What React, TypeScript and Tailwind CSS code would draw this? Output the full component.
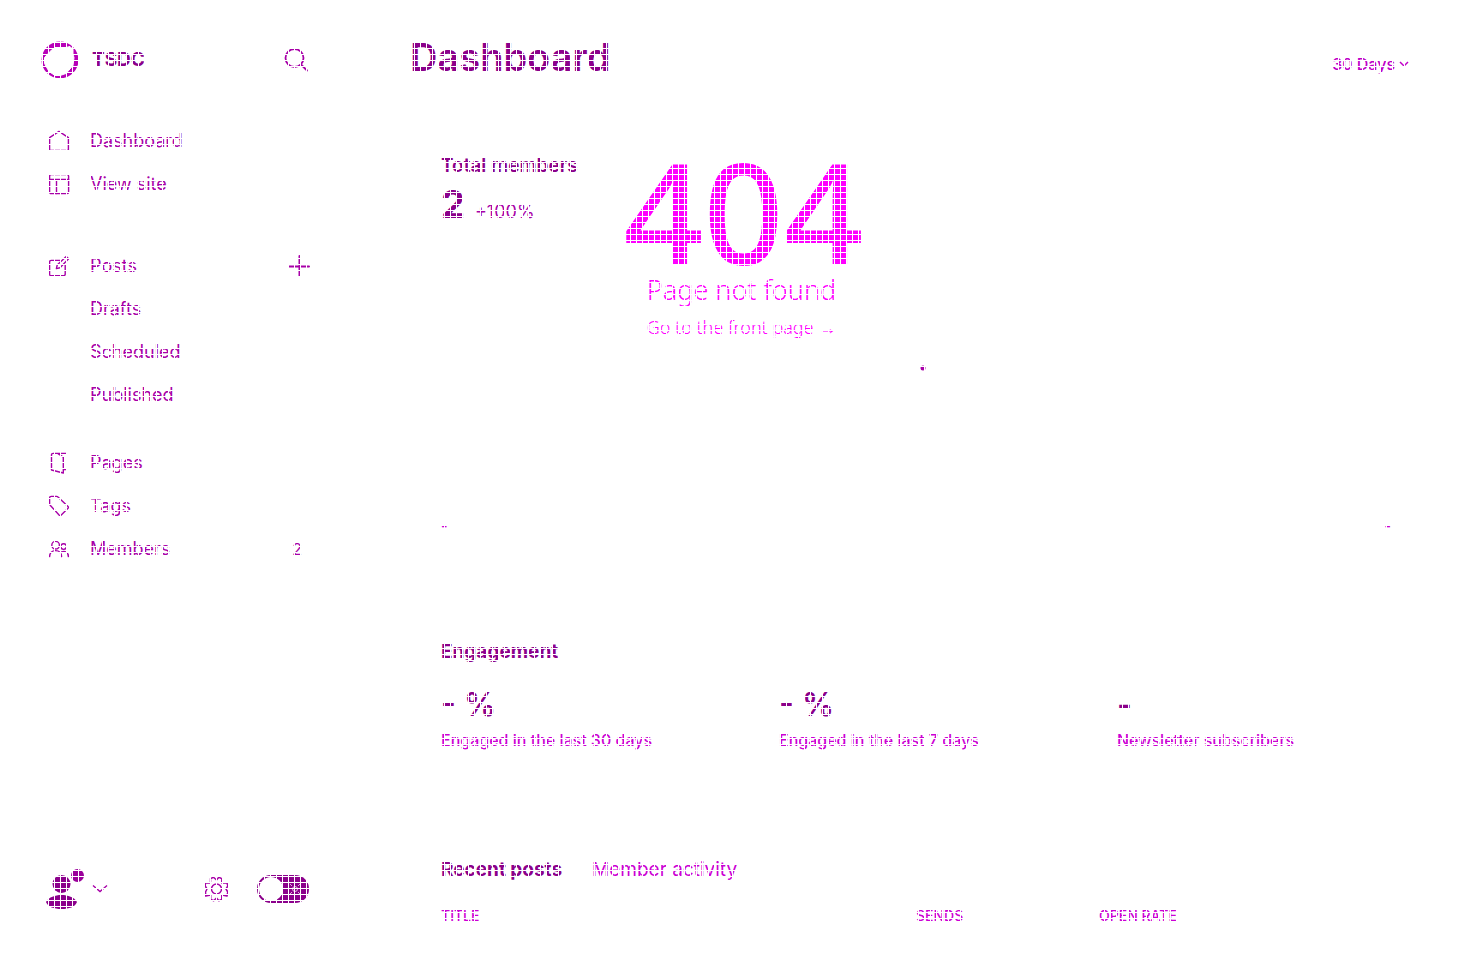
import type { ReactNode } from "react";

function Icon({ children, className = "size-[22px]" }: { children: ReactNode; className?: string }) {
  return (
    <svg
      viewBox="0 0 22 22"
      fill="none"
      stroke="currentColor"
      strokeWidth="1.4"
      strokeLinecap="round"
      strokeLinejoin="round"
      aria-hidden="true"
      className={`shrink-0 ${className}`}
    >
      {children}
    </svg>
  );
}

const HomeIcon = () => (
  <Icon>
    <path d="M1.6 7.6 11 1.4l9.4 6.2v12.8H1.6z" />
  </Icon>
);
const SiteIcon = () => (
  <Icon>
    <rect x="1.6" y="1.6" width="19" height="19" rx="1.5" />
    <path d="M1.6 6.5h19M8.5 6.5v14" />
  </Icon>
);
const PostsIcon = () => (
  <Icon>
    <path d="M12 5.4H3.2a1.6 1.6 0 0 0-1.6 1.6v12.2a1.6 1.6 0 0 0 1.6 1.6h12.4a1.6 1.6 0 0 0 1.6-1.6V10" />
    <path d="m8.4 13.6.8-3.6 9-8.6 2.4 2.4-8.6 9z" />
  </Icon>
);
const PagesIcon = () => (
  <Icon>
    <path d="M3.5 18V3a1.6 1.6 0 0 1 1.600-1.600h13M3.500 18l11.800 3V5.200L10 1.600M15.500 17.500h2.400" />
  </Icon>
);
const TagIcon = () => (
  <Icon>
    <path d="M1.6 8.8V3a1.6 1.6 0 0 1 1.6-1.6h5.4a2 2 0 0 1 1.4.6l10 9.6a1.2 1.2 0 0 1 0 1.7l-7 7a1.2 1.2 0 0 1-1.7 0L2.2 10.2a2 2 0 0 1-.6-1.4z" />
  </Icon>
);
const MembersIcon = () => (
  <Icon>
    <circle cx="7.6" cy="7.2" r="3.8" />
    <circle cx="15.6" cy="8.6" r="2.8" />
    <path d="M1.6 18.6c.2-4 2.6-6 6-6s5.8 2 6 6M13.6 13.8c3.6-1.4 6.6.6 6.8 4.8" />
  </Icon>
);

function NavItem({ icon, label, end }: { icon?: ReactNode; label: string; end?: ReactNode }) {
  return (
    <li className="flex h-[43px] items-center justify-between">
      <a href="#" className="flex items-center gap-5">
        <span className="size-[22px]">{icon}</span>
        {label}
      </a>
      {end}
    </li>
  );
}

function Metric({ value, label }: { value: string; label: string }) {
  return (
    <div>
      <p className="text-[32px] leading-[40px] font-semibold text-[#8b008b]">{value}</p>
      <p className="mt-[3px] text-base leading-6 font-medium text-[#cc00d4]">{label}</p>
    </div>
  );
}

export default function App() {
  return (
    <div className="relative flex min-h-screen bg-white font-['Inter',sans-serif] text-[#a800a8]">
      <aside className="flex w-[351px] shrink-0 flex-col pr-[41px] pb-[44px] pl-12">
        <div className="flex h-[120px] items-center justify-between">
          <a href="#" className="-ml-2 flex items-center gap-3 text-[19px] font-bold text-[#8b008b]">
            <svg viewBox="0 0 40 40" className="size-10" aria-hidden="true">
              <circle cx="20" cy="20" r="18.500" fill="#b800b8" />
              <path d="M12 9.500 15 7.500h11l4-1 3 3v5l1 3-1 8-7 8-6 2h-5l-6-4-4.500-8v-6z" fill="#fff" stroke="#fff" strokeWidth="1" strokeLinejoin="round" />
            </svg>
            TSDC
          </a>
          <button type="button" aria-label="Search">
            <svg viewBox="0 0 26 26" className="size-[26px]" fill="none" stroke="currentColor" strokeWidth="1.8" strokeLinecap="round">
              <circle cx="10.5" cy="11" r="9" />
              <path d="m17 17.500 6 6" />
            </svg>
          </button>
        </div>
        <nav className="-mt-px text-lg">
          <ul>
            <NavItem icon={<HomeIcon />} label="Dashboard" />
            <NavItem icon={<SiteIcon />} label="View site" />
          </ul>
          <ul className="mt-[39px]">
            <NavItem
              icon={<PostsIcon />}
              label="Posts"
              end={
                <button type="button" aria-label="New post">
                  <Icon>
                    <path d="M11.5 1v20M1 11.5h20" strokeWidth="2" />
                  </Icon>
                </button>
              }
            />
            <NavItem label="Drafts" />
            <NavItem label="Scheduled" />
            <NavItem label="Published" />
          </ul>
          <ul className="mt-[25px]">
            <NavItem icon={<PagesIcon />} label="Pages" />
            <NavItem icon={<TagIcon />} label="Tags" />
            <NavItem icon={<MembersIcon />} label="Members" end={<span className="pr-2 text-base">2</span>} />
          </ul>
        </nav>
        <div className="mt-auto flex items-center justify-between pr-px">
          <button type="button" aria-label="Account" className="-ml-[2px] flex items-center gap-[6px]">
            <svg viewBox="0 0 40 42" className="h-[42px] w-10" fill="#8b008b" aria-hidden="true">
              <circle cx="15.5" cy="16" r="9" />
              <path d="M0 34c3-5 9-7 15.500-7S28 29 31 34c-2 5-8 7-15.500 7S2 39 0 34z" />
              <circle cx="31.500" cy="7.500" r="6.500" fill="#9a009a" />
            </svg>
            <svg viewBox="0 0 16 10" className="h-[10px] w-4" fill="none" stroke="currentColor" strokeWidth="1.4" aria-hidden="true">
              <path d="m1 1.500 7 6 7-6" />
            </svg>
          </button>
          <div className="flex items-center gap-7">
            <button type="button" aria-label="Settings">
              <svg viewBox="0 0 26 26" className="size-[26px]" fill="none" stroke="currentColor" strokeWidth="1.5" strokeLinejoin="round">
                <circle cx="13.500" cy="13" r="5" />
                <path d="m13.500 4 2.300-2.800 3 1.400V7l5.200-.2.800 3.200-1.800 3 1.800 3-.8 4-5.200-1v4.400l-3 1.400-2.300-2.800-2.800 2.800-3-1.400V19l-5 1-.2-4L4 13l-1.800-3 .3-3.200 5 .2V2.600l3-1.400z" />
              </svg>
            </button>
            <label className="relative flex h-7 w-[52px] cursor-pointer items-center rounded-full bg-[#8b008b] p-[2px]">
              <input type="checkbox" aria-label="Night mode" className="peer sr-only" />
              <span className="size-6 rounded-full bg-white" />
              <svg viewBox="0 0 12 12" className="ml-[6px] size-3" stroke="#fff" strokeWidth="0.7" fill="none" aria-hidden="true">
                <circle cx="6" cy="6" r="2.500" />
                <path d="m1 1 2 2M11 1 9 3M1 11l2-2M11 11 9 9" />
              </svg>
            </label>
          </div>
        </div>
      </aside>

      <main className="min-w-0 flex-1 pr-[74px] pl-[60px]">
        <header className="-ml-px flex h-[114px] items-center justify-between">
          <h1 className="text-[38px] leading-[46px] font-semibold text-[#8b008b]">Dashboard</h1>
          <button type="button" className="mt-[14px] flex items-center gap-1 text-base font-medium text-[#c000c8]">
            30 Days
            <svg viewBox="0 0 10 8" className="h-2 w-[10px]" fill="none" stroke="currentColor" strokeWidth="1.5" aria-hidden="true">
              <path d="m1 2 4 4 4-4" />
            </svg>
          </button>
        </header>

        <section className="h-[524px] pt-[38px] pr-[18px] pl-[30px]">
          <h2 className="text-[19px] leading-[27px] font-semibold text-[#8b008b]">Total members</h2>
          <p className="flex items-baseline gap-[10px]">
            <span className="text-[38px] leading-[50px] font-bold text-[#8b008b]">2</span>
            <span className="text-lg">+100%</span>
          </p>
          <div className="flex h-[304px] flex-col justify-between pt-[136px] text-[#cc00d4]">
            <svg viewBox="0 0 6 6" className="ml-[14px] size-[6px] self-center" fill="#a800a8" aria-hidden="true">
              <circle cx="3" cy="3" r="2.500" />
            </svg>
            <div className="flex justify-between text-sm leading-[14px] font-medium">
              <span>-</span>
              <span>-</span>
            </div>
          </div>
        </section>

        <section className="h-[218px] pr-[18px] pl-[30px]">
          <h2 className="text-[19px] leading-[28px] font-bold text-[#8b008b]">Engagement</h2>
          <div className="mt-[19px] grid grid-cols-3 gap-16">
            <Metric value="- %" label="Engaged in the last 30 days" />
            <Metric value="- %" label="Engaged in the last 7 days" />
            <Metric value="-" label="Newsletter subscribers" />
          </div>
        </section>

        <section className="pr-[18px] pl-[30px]">
          <div className="flex gap-[30px] text-[19px] leading-[28px]">
            <button type="button" className="font-bold text-[#8b008b]">Recent posts</button>
            <button type="button" className="text-[#cc00d4]">Member activity</button>
          </div>
          <table className="mt-[22px] w-full table-fixed text-left text-sm leading-5 text-[#cc00d4] uppercase">
            <thead>
              <tr>
                <th className="w-1/2 font-medium">Title</th>
                <th className="w-[183px] font-medium">Sends</th>
                <th className="font-medium">Open rate</th>
              </tr>
            </thead>
          </table>
        </section>
      </main>

      <div className="absolute inset-x-0 top-[147px] flex flex-col items-center font-['Noto_Sans',sans-serif] text-[#ff00ff]">
        <p className="pl-1 text-[140px] leading-[128px] font-medium">404</p>
        <p className="text-[27px] leading-[30px] font-light">Page not found</p>
        <a href="#" className="mt-[9px] text-lg leading-[26px] font-light">
          Go to the front page →
        </a>
      </div>

      <div className="pointer-events-none absolute inset-0 bg-[linear-gradient(to_right,#fff_1px,transparent_1px),linear-gradient(to_bottom,#fff_1px,transparent_1px)] bg-[size:6px_6px]" />
    </div>
  );
}
